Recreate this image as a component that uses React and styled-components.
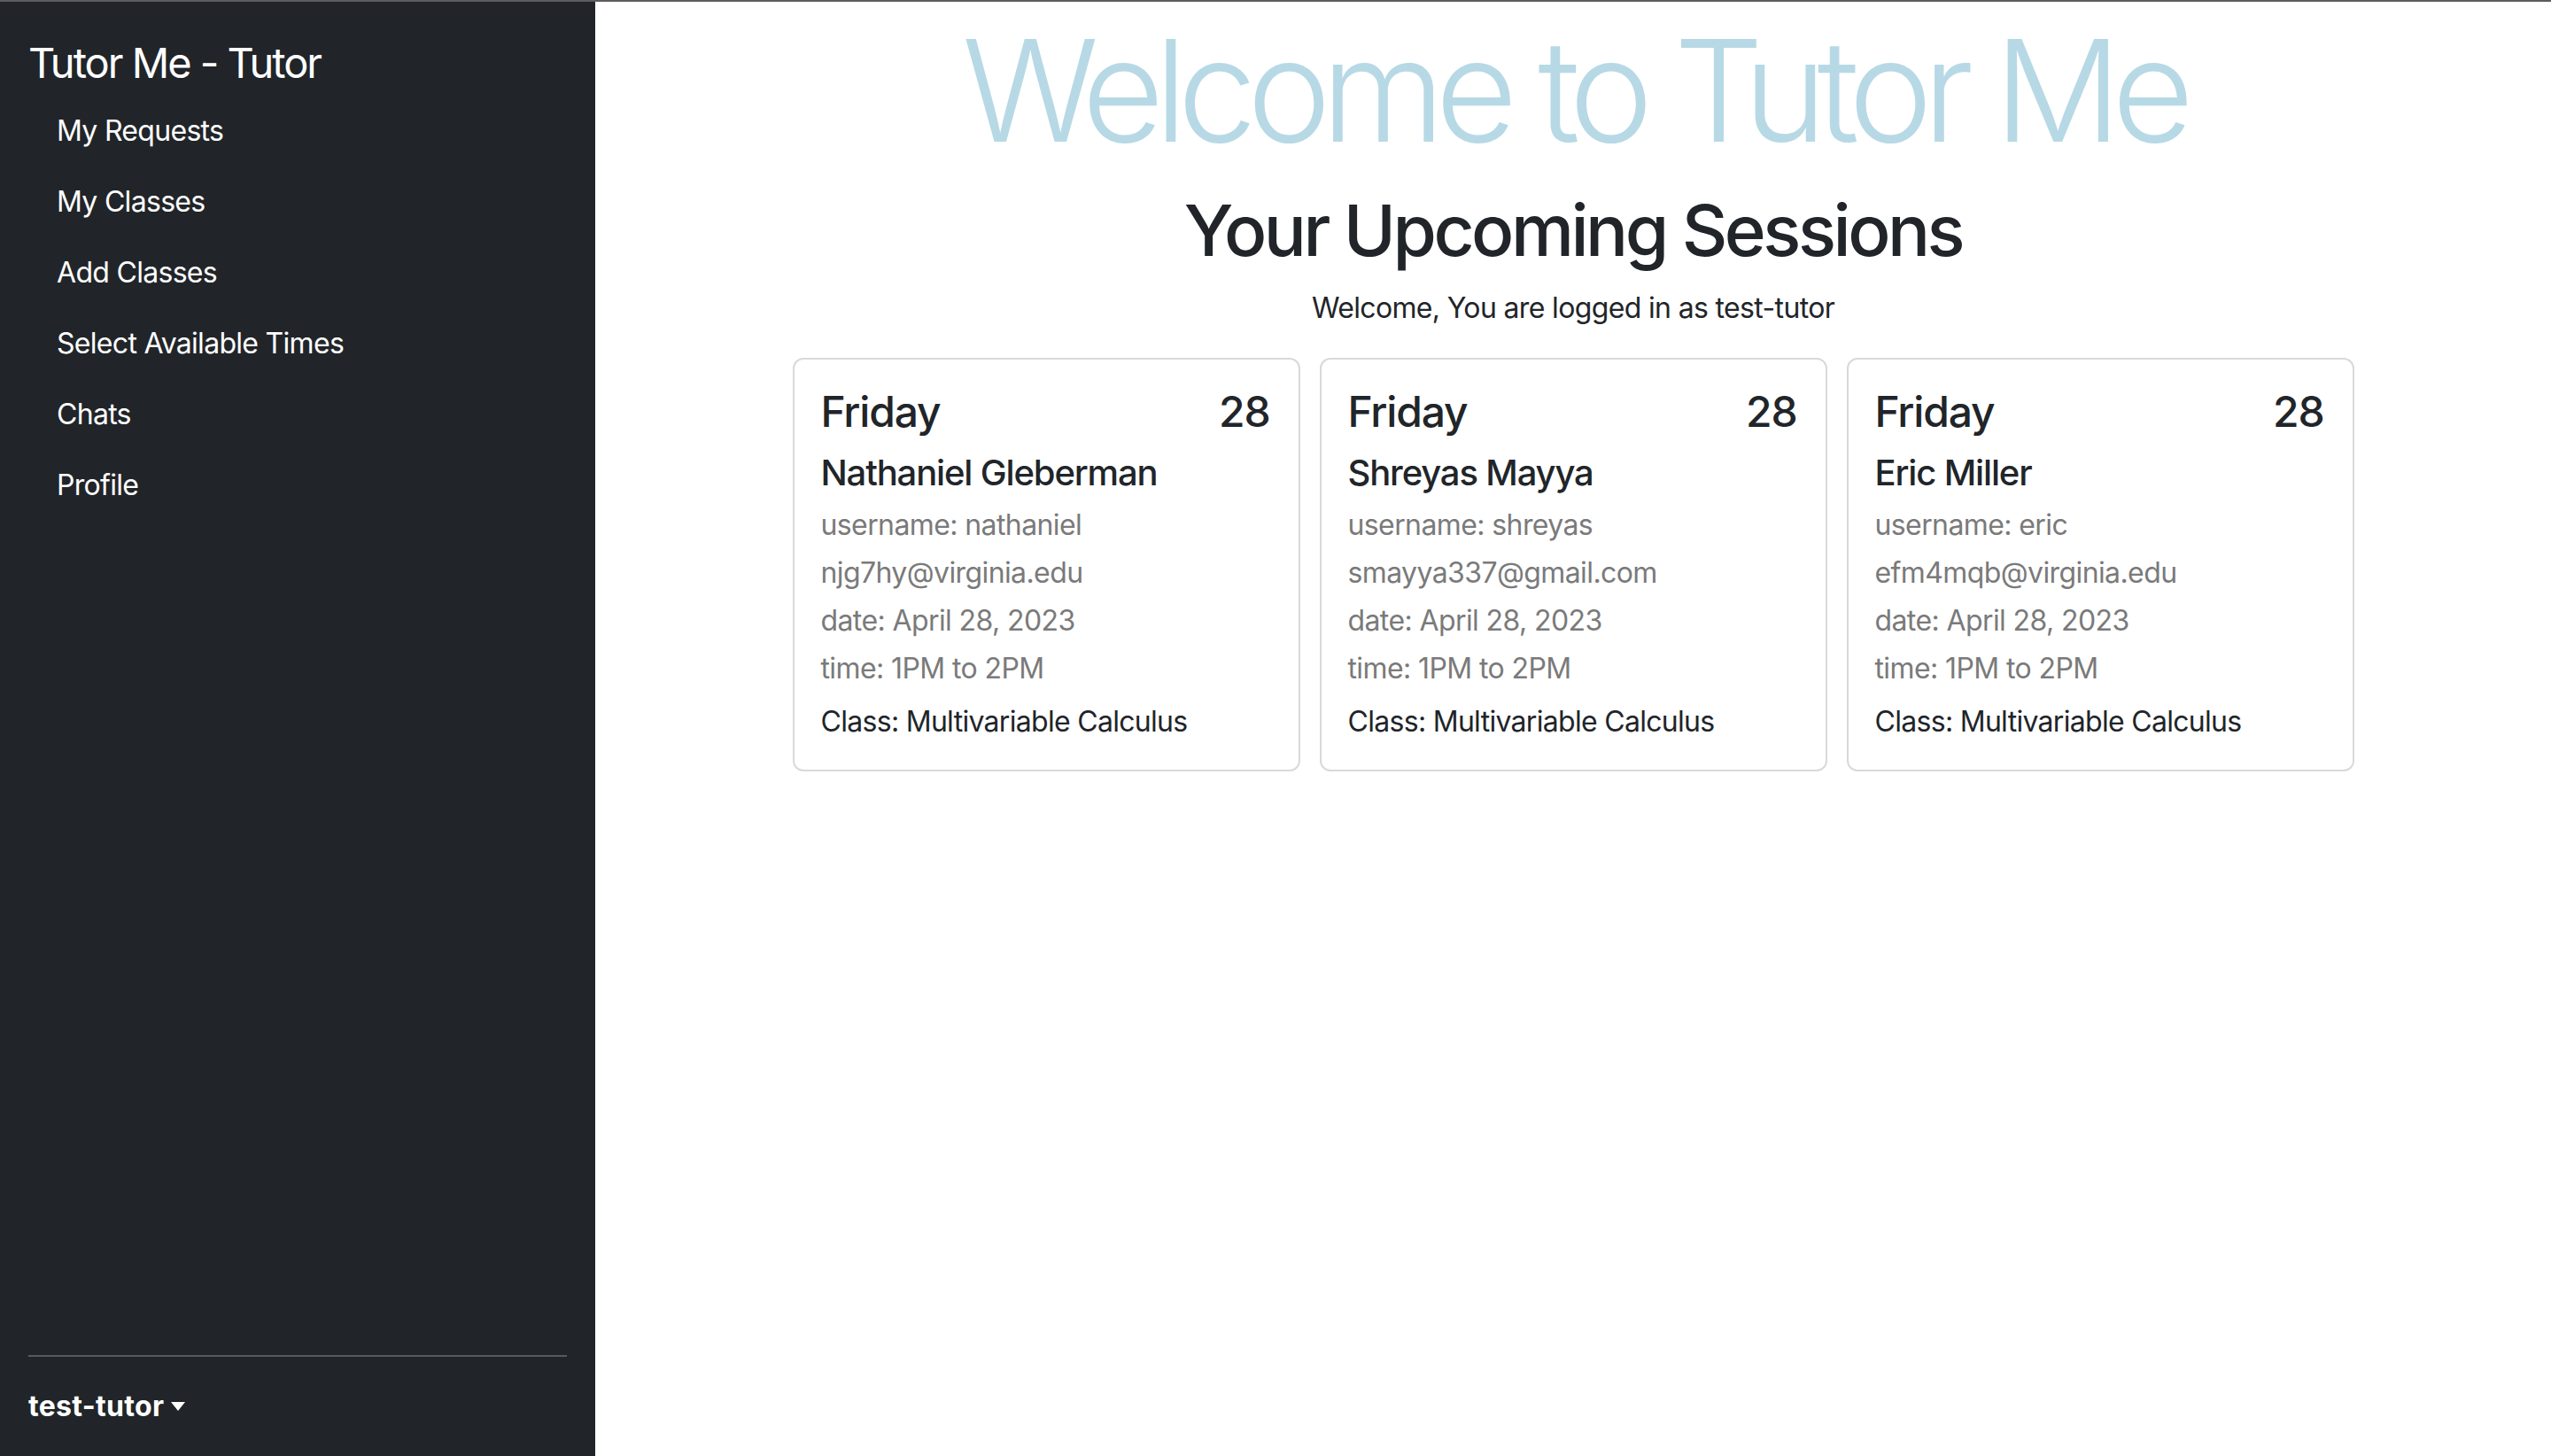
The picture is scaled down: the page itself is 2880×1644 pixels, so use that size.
import React from "react";
import styled, { createGlobalStyle } from "styled-components";

const sessions = [
  {
    day: "Friday",
    num: "28",
    name: "Nathaniel Gleberman",
    username: "nathaniel",
    email: "njg7hy@virginia.edu",
  },
  {
    day: "Friday",
    num: "28",
    name: "Shreyas Mayya",
    username: "shreyas",
    email: "smayya337@gmail.com",
  },
  {
    day: "Friday",
    num: "28",
    name: "Eric Miller",
    username: "eric",
    email: "efm4mqb@virginia.edu",
  },
];

const links = [
  "My Requests",
  "My Classes",
  "Add Classes",
  "Select Available Times",
  "Chats",
  "Profile",
];

const App = () => {
  return (
    <>
      <GlobalStyle />
      <Page>
        <Sidebar>
          <Brand>Tutor Me - Tutor</Brand>
          <NavList>
            {links.map((l) => (
              <NavLink key={l}>{l}</NavLink>
            ))}
          </NavList>
          <Spacer />
          <Divider />
          <UserToggle>test-tutor</UserToggle>
        </Sidebar>
        <Main>
          <Display>Welcome to Tutor Me</Display>
          <Heading>Your Upcoming Sessions</Heading>
          <Lead>Welcome, You are logged in as test-tutor</Lead>
          <CardRow>
            {sessions.map((s) => (
              <Card key={s.username}>
                <CardTop>
                  <span>{s.day}</span>
                  <span>{s.num}</span>
                </CardTop>
                <Name>{s.name}</Name>
                <Muted>username: {s.username}</Muted>
                <Muted>{s.email}</Muted>
                <Muted>date: April 28, 2023</Muted>
                <Muted>time: 1PM to 2PM</Muted>
                <ClassLine>Class: Multivariable Calculus</ClassLine>
              </Card>
            ))}
          </CardRow>
        </Main>
      </Page>
    </>
  );
};

const GlobalStyle = createGlobalStyle`
  body {
    margin: 0;
    font-family: Inter, "Liberation Sans", sans-serif;
    color: #212529;
    background: #fff;
  }
`;

const Page = styled.div`
  display: flex;
  height: 1642px;
  border-top: 2px solid #5c5c5e;
`;

const Sidebar = styled.div`
  width: 672px;
  flex-shrink: 0;
  background: #212529;
  color: #fff;
  display: flex;
  flex-direction: column;
  padding: 40px 32px 32px;
  box-sizing: border-box;
`;

const Brand = styled.div`
  font-size: 47px;
  line-height: 58px;
  letter-spacing: -2px;
  margin-bottom: 8px;
`;

const NavList = styled.div`
  display: flex;
  flex-direction: column;
`;

const NavLink = styled.a`
  font-size: 32px;
  line-height: 48px;
  letter-spacing: -0.7px;
  padding: 16px 32px;
  color: #fff;
`;

const Spacer = styled.div`
  flex: 1;
`;

const Divider = styled.hr`
  border: 0;
  border-top: 2px solid #58595c;
  margin: 32px 0;
  width: 100%;
`;

const UserToggle = styled.div`
  font-size: 32px;
  line-height: 48px;
  font-weight: 700;
  letter-spacing: 0.3px;
  display: flex;
  align-items: center;

  &::after {
    content: "";
    margin-left: 8px;
    border-top: 10px solid #fff;
    border-left: 8px solid transparent;
    border-right: 8px solid transparent;
  }
`;

const Main = styled.div`
  flex: 1;
  display: flex;
  flex-direction: column;
  align-items: center;
  text-align: center;
`;

const Display = styled.h1`
  margin: 4px 0 14px;
  font-size: 160px;
  line-height: 192px;
  font-weight: 300;
  color: #b7d9e5;
  letter-spacing: -11px;
`;

const Heading = styled.h2`
  margin: 0 0 16px;
  font-size: 80px;
  line-height: 96px;
  font-weight: 500;
  letter-spacing: -3.5px;
`;

const Lead = styled.p`
  margin: 0 0 32px;
  font-size: 32px;
  line-height: 48px;
  letter-spacing: -0.65px;
`;

const CardRow = styled.div`
  display: flex;
  gap: 22px;
`;

const Card = styled.div`
  width: 573px;
  box-sizing: border-box;
  border: 2px solid #d9d9d9;
  border-radius: 12px;
  padding: 30px 32px 30px 30px;
  text-align: left;
  display: flex;
  flex-direction: column;
`;

const CardTop = styled.div`
  display: flex;
  justify-content: space-between;
  font-size: 48px;
  line-height: 58px;
  font-weight: 500;
  letter-spacing: -1.2px;
  margin-bottom: 16px;
`;

const Name = styled.div`
  font-size: 40px;
  line-height: 48px;
  font-weight: 500;
  letter-spacing: -1.15px;
  margin-bottom: 11px;
`;

const Muted = styled.div`
  font-size: 32px;
  line-height: 48px;
  letter-spacing: -0.6px;
  color: #7a7a7a;
  margin-bottom: 6px;
`;

const ClassLine = styled.div`
  font-size: 32px;
  line-height: 48px;
  letter-spacing: -0.7px;
  margin-top: 6px;
`;

export default App;
